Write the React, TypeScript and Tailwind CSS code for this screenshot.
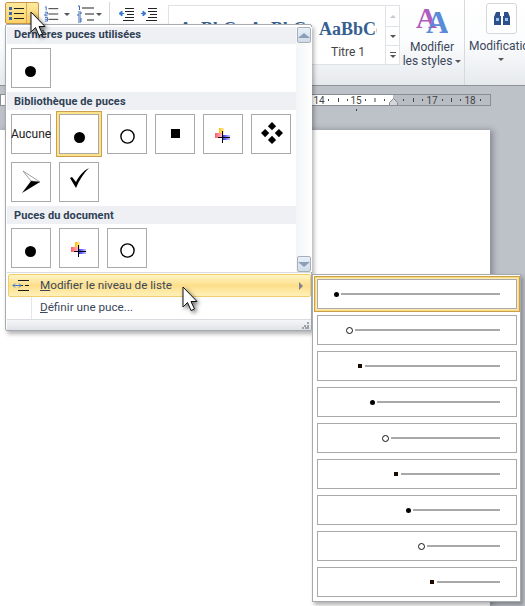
import React from 'react';

const Disc = ({ size = 11 }: { size?: number }) => (
  <svg width={size} height={size} viewBox="0 0 11 11"><circle cx="5.5" cy="5.5" r="5.5" fill="#000" /></svg>
);

const Ring = () => (
  <svg width="15" height="15" viewBox="0 0 15 15"><circle cx="7.5" cy="7.5" r="6.600" fill="#fff" stroke="#000" strokeWidth="1.400" /></svg>
);

const Square = () => <div className="w-[9px] h-[9px] bg-black" />;

const ColorPlus = ({ id }: { id: string }) => (
  <svg width="16" height="15" viewBox="0 0 16 15">
    <defs>
      <linearGradient id={`${id}r`} x1="0" x2="1"><stop offset="0" stopColor="#ff5a6a" /><stop offset="1" stopColor="#ffc8c8" /></linearGradient>
      <linearGradient id={`${id}b`} x1="0" x2="1"><stop offset="0" stopColor="#2020ff" /><stop offset="1" stopColor="#c8c8ff" /></linearGradient>
      <linearGradient id={`${id}y`} x1="0" x2="1"><stop offset="0" stopColor="#ffc000" /><stop offset="1" stopColor="#ffeeb0" /></linearGradient>
    </defs>
    <rect x="4" y="0" width="5" height="7" fill={`url(#${id}y)`} />
    <rect x="0" y="5" width="8" height="5" fill={`url(#${id}r)`} />
    <rect x="7" y="7" width="8" height="5" fill={`url(#${id}b)`} />
    <rect x="7" y="3" width="1" height="12" fill="#000" />
    <rect x="3" y="9" width="12" height="1" fill="#000" />
  </svg>
);

const Diamonds = () => (
  <svg width="22" height="22" viewBox="0 0 24 24" fill="#000">
    <path d="M12 0l4.500 4.500L12 9 7.500 4.500z" />
    <path d="M12 15l4.500 4.500L12 24l-4.500-4.500z" />
    <path d="M4.500 7.500L9 12l-4.500 4.500L0 12z" />
    <path d="M19.500 7.500L24 12l-4.500 4.500L15 12z" />
  </svg>
);

const Arrowhead = () => (
  <svg width="20" height="24" viewBox="0 0 20 24">
    <path d="M2 1l17 11-9-1z" fill="#fff" stroke="#777" strokeWidth="0.700" />
    <path d="M1 23L19 12 10 11z" fill="#000" />
  </svg>
);

const Check = () => (
  <svg width="21" height="20" viewBox="0 0 21 20">
    <path d="M1 10l2-1 4 5C10 8 14 3 20 0 15 5 10 12 7 20z" fill="#000" />
  </svg>
);

const Cell = ({ children, selected }: { children?: React.ReactNode; selected?: boolean }) => (
  <div
    className={`w-10 h-10 flex items-center justify-center border border-[#a9a9a9] bg-white ${
      selected ? 'shadow-[0_0_0_2px_#fde28c,0_0_0_3px_#c9a04f]' : ''
    }`}
  >
    {children}
  </div>
);

const Header = ({ children, h }: { children: React.ReactNode; h: string }) => (
  <div className={`${h} bg-[#eef0f3] pl-[7px] flex items-center font-['Roboto',sans-serif] text-[11px] font-bold text-[#2f3f55] tracking-[0.1px]`}>
    {children}
  </div>
);

const Cursor = ({ className }: { className: string }) => (
  <svg
    className={`absolute z-30 drop-shadow-[2px_2px_2px_rgba(0,0,0,0.55)] ${className}`}
    width="16"
    height="26"
    viewBox="0 0 16 26"
  >
    <path d="M1 1v20l4.500-4.500 3.500 8 3.500-1.500-3.500-7.500H15z" fill="#fff" stroke="#111" strokeWidth="1" strokeLinejoin="round" />
  </svg>
);

const ListLevelIcon = () => (
  <svg width="18" height="12" viewBox="0 0 18 12">
    <path d="M6 .5h11M9 5.500h2M13 5.500h4M6 10.500h11" stroke="#1a1a1a" strokeWidth="1" />
    <path d="M1 5.500h8M3 3.500l-2 2 2 2M7 3.500l2 2-2 2" stroke="#3b78d0" strokeWidth="1" fill="none" />
  </svg>
);

const levels = [
  { kind: 'disc', x: 15, gap: 2 },
  { kind: 'ring', x: 28, gap: 2 },
  { kind: 'square', x: 40, gap: 3 },
  { kind: 'disc', x: 51, gap: 2 },
  { kind: 'ring', x: 64, gap: 2 },
  { kind: 'square', x: 76, gap: 3 },
  { kind: 'disc', x: 87, gap: 2 },
  { kind: 'ring', x: 100, gap: 2 },
  { kind: 'square', x: 112, gap: 3 },
];

const LevelBullet = ({ kind }: { kind: string }) => {
  if (kind === 'disc') return <div className="w-[5px] h-[5px] ml-px rounded-full bg-black" />;
  if (kind === 'ring') return <div className="w-[7px] h-[7px] rounded-full border border-[#111] bg-white" />;
  return <div className="w-1 h-1 -mt-px bg-[#1a0a00]" />;
};

const NumberedIcon = ({ wide }: { wide?: boolean }) => (
  <svg width={wide ? 18 : 16} height="18" viewBox="0 0 18 18">
    <path d={wide ? 'M5 3h12M8 9h9M10 15h7' : 'M5 3h11M5 9h11M5 15h11'} stroke="#222" strokeWidth="1" />
    <path d="M1 1h1.500v4M1 7h3v2H1v2h3M1 13h3v4H1M1 15h3" stroke="#3a66b8" strokeWidth="1" fill="none" />
  </svg>
);

const IndentIcon = ({ flip }: { flip?: boolean }) => (
  <svg width="16" height="14" viewBox="0 0 16 14">
    <path d="M7 1.500h9M7 4.500h9M9 7.500h7M7 10.500h9M5 13.500h11" stroke="#222" strokeWidth="1" />
    <path d={flip ? 'M0 6.500h4M2 4l3 2.500L2 9z' : 'M6 6.500H2M4 4L1 6.500 4 9z'} stroke="#3a78d4" strokeWidth="1" fill="#3a78d4" />
  </svg>
);

const SmallArrow = () => <div className="w-0 h-0 border-x-[3px] border-x-transparent border-t-[3px] border-t-[#555]" />;

const Ruler = () => (
  <svg className="block" width="491" height="17" viewBox="0 0 491 17">
    <rect x="0.500" y="0.500" width="490" height="11" fill="#b9bdc4" stroke="#8a8e94" />
    <rect x="1" y="1" width="392" height="10" fill="#fff" />
    <g fontFamily="'Roboto', sans-serif" fontSize="10" fill="#444" textAnchor="middle">
      <text x="319" y="10">14</text>
      <text x="356" y="10">15</text>
      <text x="432" y="10">17</text>
      <text x="470" y="10">18</text>
    </g>
    <path d="M328.500 5v2M338.500 4v4M347.500 5v2M365.500 5v2M375 4v4M384.500 5v2M403.500 5v2M413.500 4v4M422.500 5v2M442.500 5v2M451.500 4v4M460.500 5v2M480.500 5v2M356.500 15v2" stroke="#444" />
    <path d="M389.500 11.500v-3l4-4 4 4v3z" fill="#d4d6da" stroke="#8a8e94" />
  </svg>
);

const galleryPreview = "font-['Liberation_Serif',serif] font-bold text-[18px] leading-[24px] text-[#365f91] whitespace-nowrap";

export default function App() {
  return (
    <div className="relative w-[525px] h-[606px] overflow-hidden bg-[#bdc1c8] flex flex-col font-['Roboto',sans-serif] text-[#3a475c]">
      {/* Ribbon */}
      <div className="h-[86px] shrink-0 flex border-b border-[#8f9398] bg-gradient-to-b from-white via-[#fbfcfd] to-[#e6e9ed]">
        <div className="w-[168px] shrink-0 pl-[5px] pt-[2px] flex items-start">
          <div className="flex h-[22px] w-[34px] shrink-0 border border-[#c8964a] rounded-[2px] bg-gradient-to-b from-[#fde99c] to-[#fbd268]">
            <div className="w-[21px] border-r border-[#d9a855] flex items-center justify-center">
              <svg width="15" height="15" viewBox="0 0 15 15">
                <path d="M5 2.500h10M5 7.500h10M5 12.500h10" stroke="#222" strokeWidth="1" />
                <path d="M0 1h3v3H0zM0 6h3v3H0zM0 11h3v3H0z" fill="#3a66b8" />
              </svg>
            </div>
          </div>
          <div className="ml-[5px] mt-[3px] flex items-center gap-[4px] shrink-0"><NumberedIcon /><SmallArrow /></div>
          <div className="ml-[7px] mt-[3px] flex items-center gap-[1px] shrink-0"><NumberedIcon wide /><SmallArrow /></div>
          <div className="ml-[7px] h-[23px] border-l border-[#d4d7db] shrink-0" />
          <div className="ml-[8px] mt-[5px] flex gap-[7px] shrink-0"><IndentIcon /><IndentIcon flip /></div>
        </div>

        {/* Styles gallery */}
        <div className="w-[232px] shrink-0 pt-[5px]">
          <div className="flex h-[60px] w-[232px] border border-[#dfe2e6] bg-white">
            <div className="flex-1 flex items-start justify-end gap-[8px] pr-[8px] pt-[11px] overflow-hidden">
              <div className={`w-[62px] h-[24px] overflow-hidden ${galleryPreview}`}>AaBbCcDd</div>
              <div className={`w-[62px] h-[24px] overflow-hidden ${galleryPreview}`}>AaBbCcDd</div>
              <div className="w-[58px] shrink-0">
                <div className={`h-[24px] overflow-hidden ${galleryPreview}`}>AaBbCcDd</div>
                <div className="text-center text-[12px] text-[#444] mt-[2px]">Titre 1</div>
              </div>
            </div>
            <div className="w-[14px] flex flex-col border-l border-[#dfe2e6]">
              <div className="h-[20px] flex items-center justify-center"><div className="w-0 h-0 border-x-[3px] border-x-transparent border-b-[3px] border-b-[#c5c8cc]" /></div>
              <div className="h-[20px] flex items-center justify-center border-y border-[#dfe2e6]"><SmallArrow /></div>
              <div className="flex-1 flex flex-col items-center justify-center gap-[2px]"><div className="w-[6px] h-px bg-[#555]" /><SmallArrow /></div>
            </div>
          </div>
        </div>

        {/* Modifier les styles */}
        <div className="w-[65px] shrink-0 flex flex-col items-center pt-[5px] border-r border-[#d6d9dd]">
          <svg width="32" height="30" viewBox="0 0 32 30">
            <text x="0" y="23" fontFamily="'Liberation Serif', serif" fontWeight="700" fontSize="29" fill="#b05cc0">A</text>
            <text x="10" y="28" fontFamily="'Liberation Serif', serif" fontWeight="700" fontSize="32" fill="#5a8bd8">A</text>
          </svg>
          <div className="text-[12px] leading-[14px] text-center mt-[5px] whitespace-nowrap">Modifier<br />les styles <span className="inline-block align-middle"><SmallArrow /></span></div>
        </div>

        {/* Modification */}
        <div className="flex-1 flex flex-col pt-[3px] overflow-hidden">
          <div className="ml-[21px] w-[31px] h-[31px] shrink-0 rounded-[3px] border border-[#d4d7db] bg-white flex items-center justify-center">
            <svg width="16" height="15" viewBox="0 0 16 15">
              <path d="M2 1h4v4h1v9H0V6zM10 1h4l2 5v8H9V5h1z" fill="#2d4f8a" />
              <path d="M2 7h3v3H2zM11 7h3v3h-3z" fill="#9fc0ea" />
            </svg>
          </div>
          <div className="text-[12px] leading-[14px] mt-[5px] ml-[4px] whitespace-nowrap">Modification</div>
          <div className="mt-[5px] ml-[33px]"><SmallArrow /></div>
        </div>
      </div>

      {/* Ruler + page */}
      <div className="mt-[8px] shrink-0"><Ruler /></div>
      <div className="mt-[19px] w-[490px] flex-1 bg-white shadow-[3px_0_6px_rgba(70,70,80,0.45)]" />

      {/* Bullet menu */}
      <div className="absolute z-10 left-[5px] top-[24px] w-[307px] h-[307px] bg-white border border-[#a6aaaf] rounded-[2px] shadow-[2px_3px_4px_rgba(0,0,0,0.3)] flex flex-col pl-px">
        <div className="flex h-[247px] shrink-0 pt-[2px]">
          <div className="w-[289px] shrink-0">
            <Header h="h-[17px]">Dernières puces utilisées</Header>
            <div className="flex gap-2 pl-[4px] pt-[4px] pb-[4px]">
              <Cell><div className="mt-[6px] mr-[2px]"><Disc /></div></Cell>
            </div>
            <Header h="h-[18px] pt-[2px]">Bibliothèque de puces</Header>
            <div className="grid grid-cols-[repeat(6,40px)] gap-2 pl-[4px] pt-[4px] pb-[4px]">
              <Cell><span className="text-[12px] text-[#222]">Aucune</span></Cell>
              <Cell selected><div className="mt-[6px]"><Disc /></div></Cell>
              <Cell><div className="mt-[4px]"><Ring /></div></Cell>
              <Cell><div className="-mt-[2px]"><Square /></div></Cell>
              <Cell><div className="mt-[3px]"><ColorPlus id="a" /></div></Cell>
              <Cell><div className="-mt-[2px] ml-[2px]"><Diamonds /></div></Cell>
              <Cell><Arrowhead /></Cell>
              <Cell><div className="-mt-[8px]"><Check /></div></Cell>
            </div>
            <Header h="h-[18px] pt-[2px]">Puces du document</Header>
            <div className="flex gap-2 pl-[4px] pt-[4px]">
              <Cell><div className="mt-[6px] mr-[2px]"><Disc /></div></Cell>
              <Cell><div className="mt-[2px]"><ColorPlus id="b" /></div></Cell>
              <Cell><div className="mt-[4px]"><Ring /></div></Cell>
            </div>
          </div>
          <div className="w-[16px] shrink-0 flex flex-col justify-between bg-gradient-to-r from-[#f3f5f7] to-white pl-[1px] pr-[1px]">
            <div className="h-[16px] border border-[#a9afb7] rounded-[2px] bg-gradient-to-b from-[#e8f0f8] to-[#cfdcea] flex items-center justify-center">
              <div className="w-0 h-0 border-x-[6px] border-x-transparent border-b-[5px] border-b-[#8b9fb8]" />
            </div>
            <div className="h-[16px] border border-[#a9afb7] rounded-[2px] bg-gradient-to-b from-[#e8f0f8] to-[#cfdcea] flex items-center justify-center">
              <div className="w-0 h-0 border-x-[6px] border-x-transparent border-t-[5px] border-t-[#8b9fb8]" />
            </div>
          </div>
        </div>

        <div className="h-px bg-[#d9dde2] shrink-0" />
        <div className="h-[23px] shrink-0 mt-[1px] ml-px flex items-center border border-[#f0cf6a] rounded-[2px] bg-gradient-to-b from-[#fff4c4] via-[#fddf8a] to-[#fff0b8] text-[11.700px] text-[#3a475c]">
          <div className="w-[31px] pl-[3px] shrink-0"><ListLevelIcon /></div>
          <span><span className="underline">M</span>odifier le niveau de liste</span>
          <div className="ml-auto mr-[7px] w-0 h-0 border-y-[4px] border-y-transparent border-l-[4px] border-l-[#7d8690]" />
        </div>
        <div className="h-[22px] shrink-0 ml-px flex items-center text-[11.700px]">
          <div className="w-[24px] h-full shrink-0 border-r border-[#e3e6ea]" />
          <span className="ml-[8px]"><span className="underline">D</span>éfinir une puce...</span>
        </div>
        <div className="flex-1 border-t border-[#d9dde2] bg-gradient-to-b from-[#f5f6f8] to-[#dfe2e7] flex justify-end items-end pr-[2px] pb-[1px]">
          <svg width="7" height="7" viewBox="0 0 7 7" fill="#9ba2aa"><path d="M5 0h2v2H5zM2 3h2v2H2zM5 3h2v2H5zM0 5h2v2H0zM3 5h2v2H3zM5 5h2v2H5z" /></svg>
        </div>
      </div>

      {/* List level submenu */}
      <div className="absolute z-20 left-[312px] top-[274px] w-[209px] h-[328px] bg-white border border-[#a6aaaf] shadow-[2px_3px_4px_rgba(0,0,0,0.3)] pl-[4px] pt-[4px] flex flex-col gap-[6px]">
        {levels.map((lv, i) => (
          <div
            key={i}
            className={`w-[200px] h-[30px] shrink-0 border border-[#a9a9a9] bg-white flex items-center ${
              i === 0 ? 'shadow-[0_0_0_1px_#fdebb5,0_0_0_2px_#fbd878,0_0_0_3px_#c9a04f]' : ''
            }`}
            style={{ paddingLeft: lv.x }}
          >
            <LevelBullet kind={lv.kind} />
            <div className="flex-1 h-[2px] bg-[#a9a9a9] mr-[16px]" style={{ marginLeft: lv.gap }} />
          </div>
        ))}
      </div>

      <Cursor className="left-[30px] top-[11px]" />
      <Cursor className="left-[182px] top-[286px]" />
    </div>
  );
}
